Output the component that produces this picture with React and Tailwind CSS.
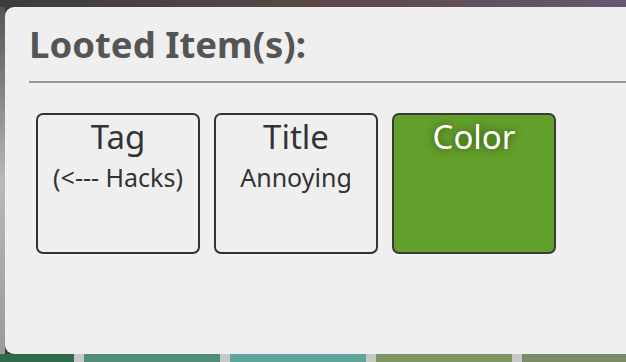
import React from 'react';

const items = [
  { title: 'Tag', sub: '(<--- Hacks)' },
  { title: 'Title', sub: 'Annoying' },
  { title: 'Color', filled: true },
];

const LootCard = ({ title, sub, filled }) => {
  if (filled) {
    return (
      <div className="w-[164px] h-[141px] rounded-[7px] border-2 border-[#3a3a3a] bg-[#639f2b] flex flex-col items-center">
        <span className="text-[33px] leading-[1.36] text-white [text-shadow:0_0_8px_rgba(0,0,0,0.55)]">
          {title}
        </span>
      </div>
    );
  }
  return (
    <div className="w-[164px] h-[141px] rounded-[7px] border-2 border-[#333] flex flex-col items-center text-[#333]">
      <span className="text-[33px] leading-[1.36]">{title}</span>
      <span className="text-[25px] leading-[1.36]">{sub}</span>
    </div>
  );
};

const App = () => {
  return (
    <div className="w-[626px] h-[362px] overflow-hidden flex flex-col bg-[#3b3b3b] font-['Noto_Sans','Open_Sans',sans-serif]">
      <div className="h-[7px] shrink-0 bg-gradient-to-r from-[#3c3c3c] via-[#5a4848] to-[#6a5670]" />
      <div className="flex flex-1 min-h-0">
        <div className="w-[5px] shrink-0 bg-gradient-to-b from-[#555] via-[#b9b9b9] to-[#9a9a9a]" />
        <div className="flex-1 -mr-[20px] rounded-[9px] bg-[#efefef] pl-[24px] pt-[12px]">
          <h1 className="text-[36.5px] leading-[1.38] font-bold text-[#555]">Looted Item(s):</h1>
          <div className="mt-[12px] h-[2px] bg-[#969696]" />
          <div className="mt-[30px] ml-[7px] flex gap-[14px]">
            {items.map((it) => (
              <LootCard key={it.title} {...it} />
            ))}
          </div>
        </div>
      </div>
      <div className="h-[8px] shrink-0 flex">
        <div className="w-[74px] bg-[#2f6b4a]" />
        <div className="w-[10px] bg-[#c8c8c8]" />
        <div className="w-[136px] bg-[#4f8e7a]" />
        <div className="w-[10px] bg-[#c8c8c8]" />
        <div className="w-[136px] bg-[#5fa39a]" />
        <div className="w-[10px] bg-[#c8c8c8]" />
        <div className="w-[136px] bg-[#7b9660]" />
        <div className="w-[10px] bg-[#c8c8c8]" />
        <div className="flex-1 bg-[#7a8a6a]" />
      </div>
    </div>
  );
};

export default App;
